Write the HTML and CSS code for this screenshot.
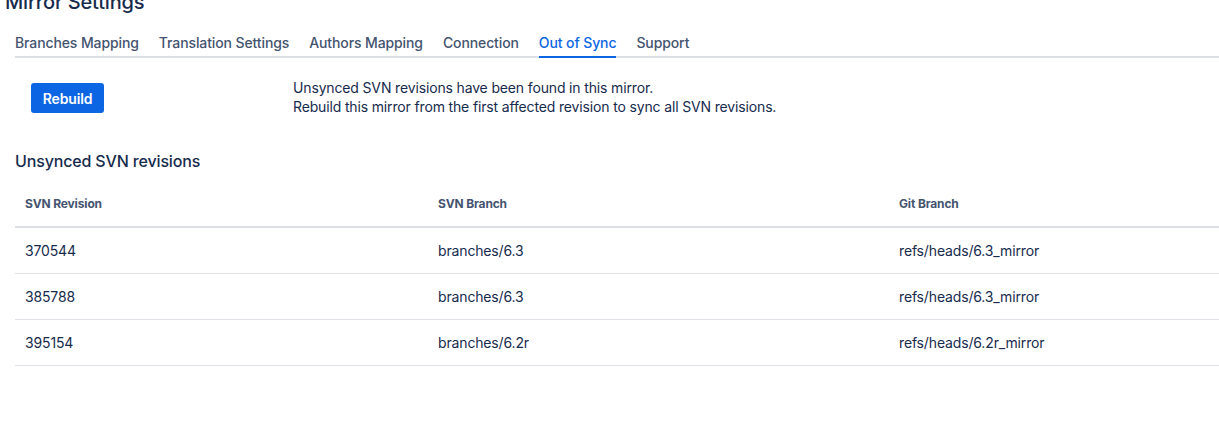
FILE: index.html
```html
<!DOCTYPE html>
<html lang="en">
<head>
<meta charset="utf-8">
<title>Mirror Settings</title>
<link rel="stylesheet" href="styles.css">
</head>
<body>
<h1 class="page-title">Mirror Settings</h1>
<main class="content">
  <nav class="tabs">
    <a class="tab">Branches Mapping</a>
    <a class="tab">Translation Settings</a>
    <a class="tab">Authors Mapping</a>
    <a class="tab">Connection</a>
    <a class="tab tab-active">Out of Sync</a>
    <a class="tab">Support</a>
  </nav>
  <section class="rebuild">
    <div class="rebuild-action">
      <button class="btn-primary">Rebuild</button>
    </div>
    <div class="rebuild-text">
      <p>Unsynced SVN revisions have been found in this mirror.</p>
      <p>Rebuild this mirror from the first affected revision to sync all SVN revisions.</p>
    </div>
  </section>
  <h2 class="section-title">Unsynced SVN revisions</h2>
  <table class="rev-table">
    <colgroup>
      <col class="c1"><col class="c2"><col class="c3">
    </colgroup>
    <thead>
      <tr><th>SVN Revision</th><th>SVN Branch</th><th>Git Branch</th></tr>
    </thead>
    <tbody>
      <tr><td>370544</td><td>branches/6.3</td><td>refs/heads/6.3_mirror</td></tr>
      <tr><td>385788</td><td>branches/6.3</td><td>refs/heads/6.3_mirror</td></tr>
      <tr><td>395154</td><td>branches/6.2r</td><td>refs/heads/6.2r_mirror</td></tr>
    </tbody>
  </table>
</main>
</body>
</html>
```
FILE: styles.css
```css
html, body {
  margin: 0;
  padding: 0;
  background: #ffffff;
  overflow: hidden;
}
body {
  font-family: Inter, "Liberation Sans", sans-serif;
  color: #172B4D;
  font-size: 14px;
  letter-spacing: -0.15px;
}
.page-title {
  margin: -10px 0 0 5px;
  font-size: 20px;
  line-height: 24px;
  font-weight: 500;
  color: #172B4D;
}
.content {
  padding-left: 15px;
}
.tabs {
  display: flex;
  gap: 20px;
  margin-top: 19px;
  border-bottom: 2px solid #DCDFE4;
}
.tab {
  position: relative;
  font-size: 14px;
  line-height: 20px;
  font-weight: 500;
  letter-spacing: -0.11px;
  color: #44546F;
  padding-bottom: 3px;
  cursor: pointer;
}
.tab-active {
  color: #0C66E4;
}
.tab-active::after {
  content: "";
  position: absolute;
  left: 0;
  right: 0;
  bottom: -2px;
  height: 2px;
  background: #0C66E4;
}
.rebuild {
  display: grid;
  grid-template-columns: 278px 1fr;
  margin-top: 20px;
}
.rebuild-action {
  padding: 5px 0 0 16px;
}
.btn-primary {
  width: 73px;
  height: 30px;
  border: none;
  border-radius: 3px;
  background: #0C66E4;
  color: #ffffff;
  font-family: Inter, "Liberation Sans", sans-serif;
  font-size: 14px;
  font-weight: 600;
  letter-spacing: -0.15px;
  padding: 0;
}
.rebuild-text p {
  margin: 0;
  line-height: 19px;
  color: #172B4D;
}
.section-title {
  margin: 35px 0 0;
  font-size: 16px;
  line-height: 20px;
  font-weight: 500;
  color: #172B4D;
}
.rev-table {
  width: 1204px;
  border-collapse: collapse;
  margin-top: 14px;
  table-layout: fixed;
}
.c1 { width: 413px; }
.c2 { width: 461px; }
.rev-table th {
  text-align: left;
  font-size: 12px;
  line-height: 16px;
  font-weight: 700;
  color: #44546F;
  padding: 11px 10px 14px;
  border-bottom: 2px solid #DCDFE4;
}
.rev-table td {
  padding: 13px 10px 12px;
  line-height: 20px;
  color: #172B4D;
  border-bottom: 1px solid #DFE1E6;
}
```
